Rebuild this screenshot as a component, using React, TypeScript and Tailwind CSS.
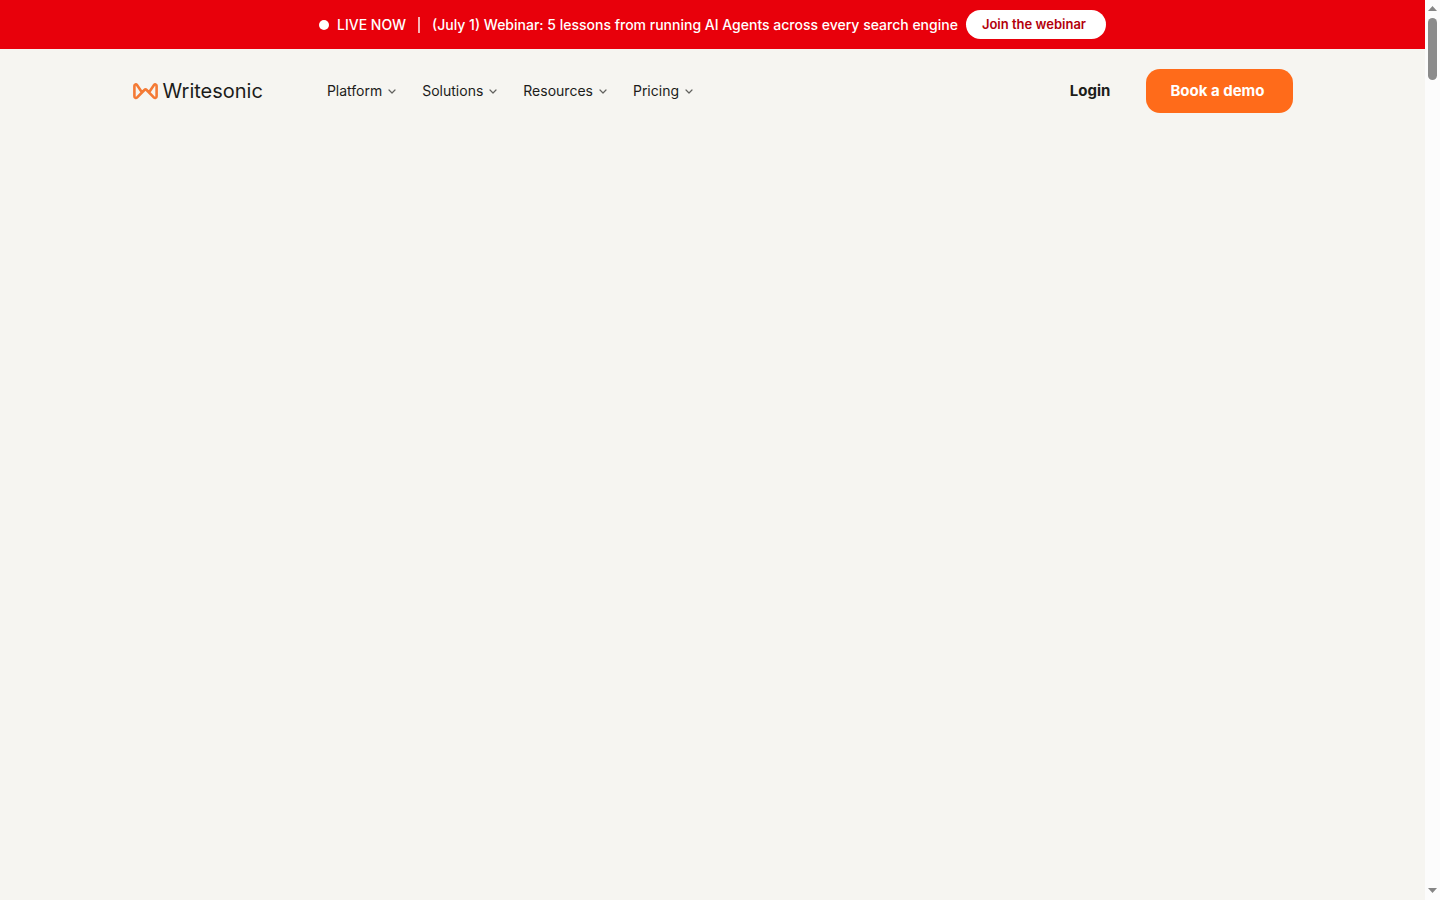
const navItems = [
    { name: 'Platform', href: '#platform' },
    { name: 'Solutions', href: '#solutions' },
    { name: 'Resources', href: '#resources' },
    { name: 'Pricing', href: '#pricing' },
];

function Logo() {
    return (
        <a href="#home" className="flex items-center gap-1 text-xl leading-6 text-[#1c1c1a]">
            <svg viewBox="0 0 26 18" className="w-[26px] h-[18px]" fill="none" aria-hidden="true">
                <path
                    d="M8.4 9.4L4 3.1C3.1 1.8 1.4 2.3 1.4 3.8V14.2C1.4 16 3 16.5 4.2 15.3L11.4 8C12.1 7.3 12.9 7.3 13.6 8L20.8 15.3C22 16.5 23.6 16 23.6 14.2V3.8C23.6 2.3 21.9 1.8 21 3.1L16.6 9.4"
                    stroke="#f47a35"
                    strokeWidth="2.6"
                    strokeLinejoin="round"
                />
            </svg>
            <span>Writesonic</span>
        </a>
    );
}

function Banner() {
    return (
        <div className="flex h-[49px] items-center justify-center bg-[#e8000b] text-sm font-medium text-white">
            <span className="mr-2 size-[10px] rounded-full bg-white" />
            <span>LIVE NOW</span>
            <span className="mx-3 h-4 w-[2px] bg-white/70" />
            <span>(July 1) Webinar: 5 lessons from running AI Agents across every search engine</span>
            <a href="#webinar" className="ml-2 rounded-full bg-white py-1 pl-4 pr-5 text-[13px] font-semibold leading-[21px] text-[#b3000c]">
                Join the webinar
            </a>
        </div>
    );
}

function Header() {
    return (
        <header className="mx-auto flex w-full max-w-[1160px] items-center py-5">
            <Logo />
            <nav className="ml-16 flex gap-6">
                {navItems.map((item) => (
                    <a key={item.name} href={item.href} className="flex items-center gap-1 text-sm text-[#1c1c1a]">
                        {item.name}
                        <svg viewBox="0 0 12 12" className="size-3" fill="none" aria-hidden="true">
                            <path d="M3 5L6 8L9 5" stroke="#62625f" strokeWidth="1.2" strokeLinecap="round" strokeLinejoin="round" />
                        </svg>
                    </a>
                ))}
            </nav>
            <a href="#login" className="ml-auto mr-9 text-[15px] font-bold text-[#1c1c1a]">
                Login
            </a>
            <button className="h-11 rounded-[14px] bg-[#ff6b1a] pl-6 pr-7 text-[15px] font-bold text-white">
                Book a demo
            </button>
        </header>
    );
}

// Scroll track with its two arrows and the thumb
function ScrollTrack() {
    return (
        <aside className="sticky top-0 flex h-screen w-[15px] flex-col items-center bg-[#fcfcfc]" aria-hidden="true">
            <svg viewBox="0 0 15 18" className="h-[18px] w-[15px]">
                <path d="M7.5 6L12 11H3Z" fill="#858585" />
            </svg>
            <div className="h-[62px] w-[9px] rounded-full bg-[#8b8b8b]" />
            <svg viewBox="0 0 15 18" className="mt-auto h-[18px] w-[15px]">
                <path d="M3 6H12L7.5 11Z" fill="#858585" />
            </svg>
        </aside>
    );
}

export default function App() {
    return (
        <div className="flex min-h-screen bg-[#f6f5f1] font-['Inter',sans-serif]">
            <main className="min-w-0 flex-1">
                <Banner />
                <Header />
            </main>
            <ScrollTrack />
        </div>
    );
}
